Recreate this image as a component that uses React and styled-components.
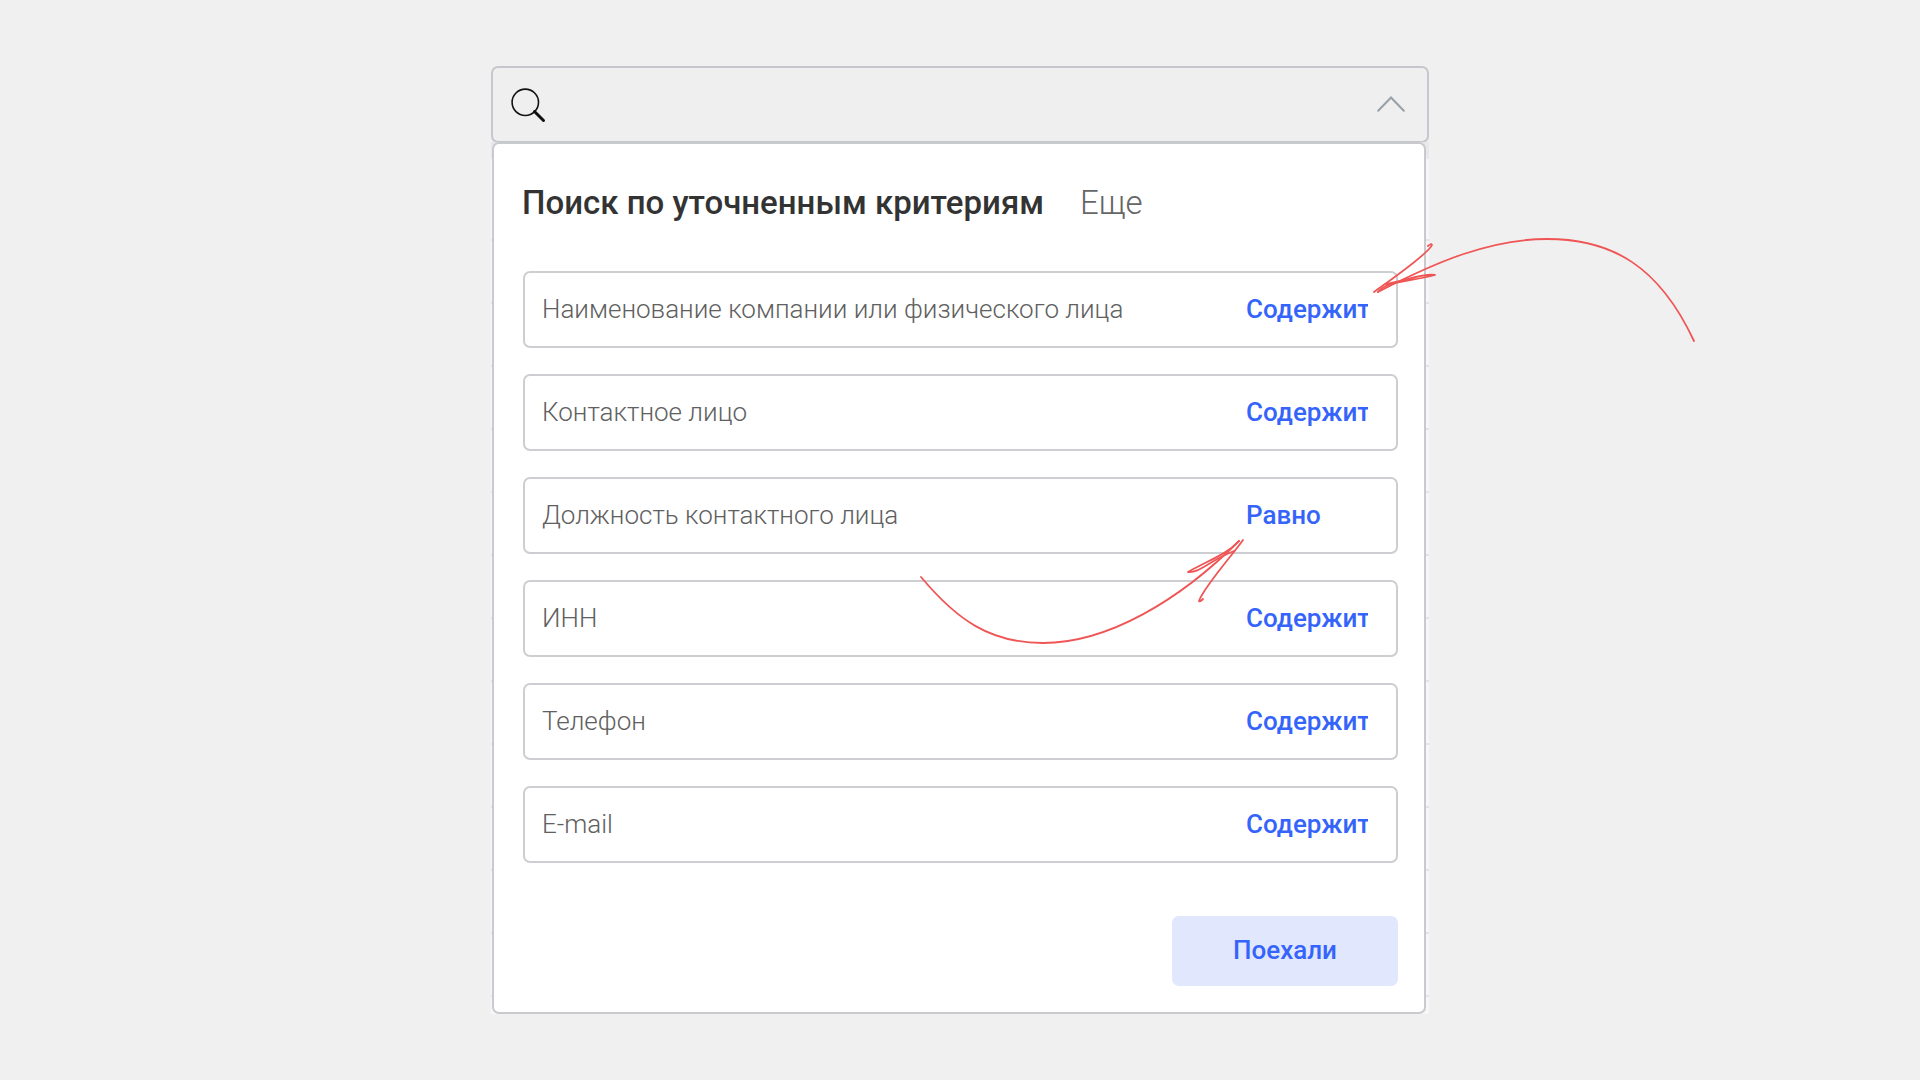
import { useState } from "react";
import { createGlobalStyle, styled } from "styled-components";

const GlobalStyle = createGlobalStyle`
  * {
    box-sizing: border-box;
  }
  body {
    margin: 0;
    background-color: #f0f0f0;
    font-family: Roboto, "Noto Sans", sans-serif;
  }
  button,
  input,
  select {
    font-family: inherit;
  }
`;

const Page = styled.main`
  display: flex;
  justify-content: center;
  min-height: 100vh;
  padding: 66px 24px;
`;

const Search = styled.form`
  position: relative;
  width: 100%;
  max-width: 938px;
`;

const SearchBar = styled.div`
  display: flex;
  align-items: center;
  height: 77px;
  padding: 0 22px 0 18px;
  border: 2px solid #c6c7cc;
  border-radius: 7px;
  background-color: #efefef;
`;

const SearchInput = styled.input`
  flex: 1;
  min-width: 0;
  height: 100%;
  border: 0;
  outline: 0;
  background: transparent;
  font-size: 26px;
`;

const ToggleButton = styled.button`
  display: flex;
  padding: 0 0 2px;
  border: 0;
  background: transparent;
  cursor: pointer;
`;

// Строки списка, которые выглядывают из-за панели
const Sheet = styled.div`
  margin-top: -1px;
  padding: 0 3px 0 1px;
  background: linear-gradient(to bottom, #e8e8ea 0 17px, #f7f7f9 17px) top / 100% 90px no-repeat,
    repeating-linear-gradient(
      to bottom,
      #f7f7f9 0 34px,
      #e4e4e8 34px 36px,
      #f7f7f9 36px 63px
    );
`;

const Panel = styled.div`
  padding: 0 26px 26px 29px;
  border: 2px solid #c9cacd;
  border-radius: 7px;
  background-color: white;
`;

const Tabs = styled.div`
  display: flex;
  gap: 36px;
  padding: 39px 0 48px;
  margin-left: -1px;
`;

const Tab = styled.button`
  padding: 0;
  border: 0;
  background: transparent;
  color: ${({ $active }) => ($active ? "#333333" : "#666666")};
  font-weight: ${({ $active }) => ($active ? 500 : 300)};
  font-size: 33px;
  line-height: 40px;
  cursor: pointer;
`;

const Fields = styled.div`
  display: flex;
  flex-direction: column;
  gap: 26px;
`;

const Field = styled.div`
  display: flex;
  align-items: center;
  height: 77px;
  padding: 0 28px 2px 17px;
  border: 2px solid #cdced2;
  border-radius: 7px;
`;

const FieldInput = styled.input`
  flex: 1;
  min-width: 0;
  height: 100%;
  padding: 0;
  border: 0;
  outline: 0;
  background: transparent;
  color: #333333;
  font-weight: 300;
  font-size: 26px;
  &::placeholder {
    color: #606060;
    opacity: 1;
  }
`;

const Condition = styled.select`
  width: 122px;
  padding: 0;
  border: 0;
  outline: 0;
  appearance: none;
  background: transparent;
  color: #3564fb;
  font-weight: 500;
  font-size: 26px;
  line-height: 32px;
  cursor: pointer;
`;

const Footer = styled.div`
  display: flex;
  justify-content: flex-end;
  margin-top: 53px;
`;

const SubmitButton = styled.button`
  width: 226px;
  height: 70px;
  padding: 0 0 2px;
  border: 0;
  border-radius: 7px;
  background-color: #e1e7fd;
  color: #3564fb;
  font-weight: 500;
  font-size: 26px;
  cursor: pointer;
`;

const Arrow = styled.svg`
  position: absolute;
  top: ${({ $top }) => $top}px;
  left: ${({ $left }) => $left}px;
  fill: none;
  stroke: #f05555;
  stroke-width: 1.8;
  stroke-linecap: round;
  stroke-linejoin: round;
  pointer-events: none;
`;

const tabs = ["Поиск по уточненным критериям", "Еще"];

const fields = [
  { name: "company", label: "Наименование компании или физического лица", condition: "Содержит" },
  { name: "contact", label: "Контактное лицо", condition: "Содержит" },
  { name: "position", label: "Должность контактного лица", condition: "Равно" },
  { name: "inn", label: "ИНН", condition: "Содержит" },
  { name: "phone", label: "Телефон", condition: "Содержит" },
  { name: "email", label: "E-mail", condition: "Содержит" },
];

const SearchIcon = () => (
  <svg width="36" height="36" viewBox="0 0 36 36" fill="none" stroke="#111111">
    <circle cx="14.3" cy="15.3" r="13.2" strokeWidth="1.6" />
    <path d="M23.5 24.5 L32.5 33.5" strokeWidth="3" strokeLinecap="round" />
  </svg>
);

const ChevronIcon = () => (
  <svg width="28" height="16" viewBox="0 0 28 16" fill="none" stroke="#98a0a8">
    <path d="M1.2 14.8 L14 1.5 L26.8 14.8" strokeWidth="2" strokeLinecap="round" />
  </svg>
);

const App = () => {
  const [open, setOpen] = useState(true);
  const [activeTab, setActiveTab] = useState(0);

  const onSubmit = (e) => {
    e.preventDefault();
  };

  return (
    <Page>
      <GlobalStyle />
      <Search onSubmit={onSubmit}>
        <SearchBar>
          <SearchIcon />
          <SearchInput type="search" aria-label="Поиск" />
          <ToggleButton
            type="button"
            aria-label="Критерии"
            aria-expanded={open}
            onClick={() => setOpen(!open)}
          >
            <ChevronIcon />
          </ToggleButton>
        </SearchBar>
        {open ? (
          <Sheet>
            <Panel>
              <Tabs>
                {tabs.map((tab, i) => (
                  <Tab key={tab} type="button" $active={i === activeTab} onClick={() => setActiveTab(i)}>
                    {tab}
                  </Tab>
                ))}
              </Tabs>
              <Fields>
                {fields.map(({ name, label, condition }) => (
                  <Field key={name}>
                    <FieldInput name={name} placeholder={label} aria-label={label} />
                    <Condition name={`${name}-condition`} aria-label={`${label}: условие`} defaultValue={condition}>
                      <option>Содержит</option>
                      <option>Равно</option>
                    </Condition>
                  </Field>
                ))}
              </Fields>
              <Footer>
                <SubmitButton>Поехали</SubmitButton>
              </Footer>
            </Panel>
          </Sheet>
        ) : null}
        {/* стрелка к первому полю */}
        <Arrow $top={164} $left={879} width="330" height="120" viewBox="1370 230 330 120">
          <path d="M1694 341 C1659 266 1612 239 1547 239 C1490 239 1436 262 1378 292" />
          <path d="M1374 292 C1392 279 1428 254 1432 245 Q1431 243 1428 246" />
          <path d="M1378 292 C1386 281 1410 282 1435 275 C1424 273 1408 280 1386 284" />
        </Arrow>
        {/* стрелка к условию «Равно» */}
        <Arrow $top={464} $left={419} width="350" height="130" viewBox="910 530 350 130">
          <path d="M921 577 C957 620 990 643 1043 643 C1108 643 1180 600 1239 541" />
          <path d="M1243 540 C1234 553 1203 588 1199 601 Q1200 602 1203 599" />
          <path d="M1239 541 C1226 555 1209 560 1188 572 C1200 573 1207 562 1234 551" />
        </Arrow>
      </Search>
    </Page>
  );
};

export default App;
